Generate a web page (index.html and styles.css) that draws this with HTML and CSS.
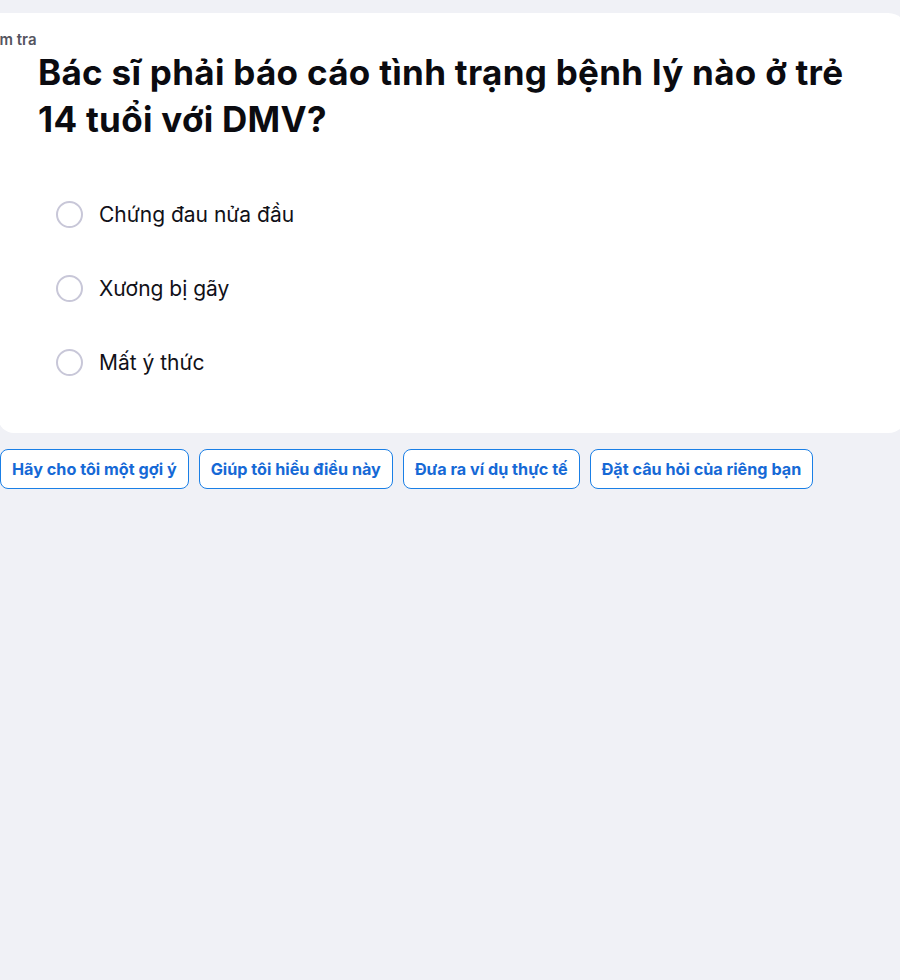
FILE: index.html
```html
<!DOCTYPE html>
<html lang="vi">
<head>
<meta charset="utf-8">
<link rel="stylesheet" href="styles.css">
</head>
<body>
<main class="page">
  <section class="card">
    <div class="label">Kiểm tra</div>
    <h1 class="question">Bác sĩ phải báo cáo tình trạng bệnh lý nào ở trẻ 14 tuổi với DMV?</h1>
    <ul class="options">
      <li class="option"><span class="radio"></span><span class="option-text">Chứng đau nửa đầu</span></li>
      <li class="option"><span class="radio"></span><span class="option-text">Xương bị gãy</span></li>
      <li class="option"><span class="radio"></span><span class="option-text">Mất ý thức</span></li>
    </ul>
  </section>
  <div class="chips">
    <button class="chip">Hãy cho tôi một gợi ý</button>
    <button class="chip">Giúp tôi hiểu điều này</button>
    <button class="chip">Đưa ra ví dụ thực tế</button>
    <button class="chip">Đặt câu hỏi của riêng bạn</button>
  </div>
</main>
</body>
</html>
```

FILE: styles.css
```css
html, body {
  margin: 0;
  padding: 0;
  background: #f0f1f6;
  overflow: hidden;
  font-family: "Inter", "Noto Sans", sans-serif;
}

.page {
  padding-top: 13px;
}

.card {
  background: #ffffff;
  margin-left: -2px;
  width: 910px;
  box-sizing: border-box;
  border-radius: 0 20px 20px 16px;
  padding: 18px 0 34px 40px;
}

.label {
  margin-left: -62px;
  font-size: 15px;
  font-weight: 600;
  color: #55555f;
  line-height: 18px;
}

.question {
  margin: 0;
  font-size: 35px;
  font-weight: 700;
  line-height: 47px;
  color: #0b0b10;
  max-width: 815px;
  letter-spacing: 0.3px;
}

.options {
  list-style: none;
  margin: 34px 0 0 0;
  padding: 0;
}

.option {
  display: flex;
  align-items: center;
  height: 74px;
  padding-left: 18px;
}

.radio {
  width: 23px;
  height: 23px;
  border: 2px solid #c8c7d8;
  border-radius: 50%;
  flex: none;
}

.option-text {
  margin-left: 16px;
  font-size: 21px;
  color: #111118;
}

.chips {
  display: flex;
  gap: 10px;
  margin-top: 16px;
}

.chip {
  height: 40px;
  padding: 0 11px;
  background: #ffffff;
  border: 1px solid #1a7fe6;
  border-radius: 8px;
  color: #1669d6;
  font-family: "Inter", "Noto Sans", sans-serif;
  font-size: 16.2px;
  font-weight: 700;
}
```
